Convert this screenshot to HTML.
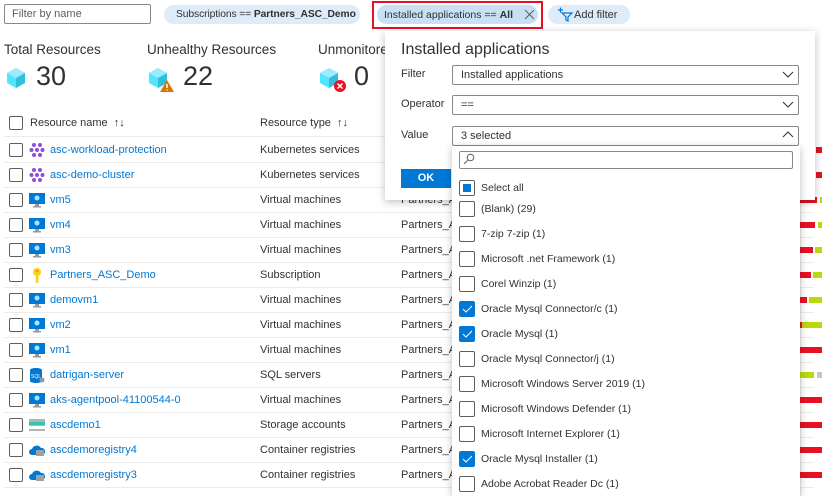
<!DOCTYPE html>
<html><head><meta charset="utf-8"><style>
*{box-sizing:border-box;margin:0;padding:0}
body{width:822px;height:496px;overflow:hidden;background:#fff;font-family:"Liberation Sans",sans-serif;font-size:11px;color:#323130;position:relative}
.a{position:absolute;white-space:nowrap}
.cb{position:absolute;width:14px;height:14px;border:1px solid #605e5c;border-radius:2px;background:#fff}
.row{position:absolute;left:4px;width:810px;height:25px;border-bottom:1px solid #edebe9}
.lnk{color:#0078d4}
.bar{position:absolute;height:6px}
.r{background:#e81123}.g{background:#bad80a}.gr{background:#c8c6c4}
.dd{position:absolute;left:452px;width:347px;height:20px;border:1px solid #8a8886;border-radius:2px;padding:3px 8px;font-size:11px}
.it{position:absolute;left:459px;height:18px;font-size:10.5px}
.it .c{position:absolute;left:0;top:0;width:16px;height:16px;border:1px solid #605e5c;border-radius:2px;background:#fff}
.it .c.on{background:#0078d4;border-color:#0078d4}
.it span{position:absolute;left:22px;top:2px;white-space:nowrap}
</style></head><body>

<div class="a" style="left:4px;top:4px;width:147px;height:20px;border:1px solid #8a8886;border-radius:2px;padding:3px 7px;color:#605e5c">Filter by name</div>
<div class="a" style="left:164px;top:5px;width:196px;height:19px;border-radius:10px;background:#deecf9;padding:4px 12px;font-size:10.3px;letter-spacing:-0.1px">Subscriptions == <b>Partners_ASC_Demo</b></div>
<div class="a" style="left:372px;top:1px;width:171px;height:28px;border:2px solid #e81123"></div>
<div class="a" style="left:377px;top:5px;width:161px;height:19px;border-radius:10px;background:#c7e0f4;padding:4px 7px;font-size:10.5px">Installed applications == <b>All</b></div>
<svg class="a" style="left:524px;top:9px" width="11" height="11"><path d="M1 1l9 9M10 1l-9 9" stroke="#605e5c" stroke-width="1"/></svg>
<div class="a" style="left:548px;top:5px;width:82px;height:19px;border-radius:10px;background:#deecf9;padding:4px 8px 3px 26px">Add filter</div>
<svg class="a" style="left:556px;top:6px" width="18" height="16"><path d="M2 4h5M4.5 1.5v5" stroke="#0078d4" stroke-width="1.2"/><path d="M6 7h10l-4 4v4l-2-1v-3z" fill="none" stroke="#0078d4" stroke-width="1.2"/></svg>

<div class="a" style="left:4px;top:42px;font-size:13.5px">Total Resources</div>
<div class="a" style="left:147px;top:42px;font-size:13.5px">Unhealthy Resources</div>
<div class="a" style="left:318px;top:42px;font-size:13.5px">Unmonitored</div>
<svg class="a" style="left:5px;top:66px" width="22" height="24"><path d="M11 2l9 5v10l-9 5-9-5V7z" fill="#50e6ff"/><path d="M11 12l9-5v10l-9 5z" fill="#32bedd"/><path d="M2 7l9 5 9-5-9-5z" fill="#9cebff"/></svg>
<div class="a" style="left:36px;top:61px;font-size:27px;color:#323130">30</div>
<svg class="a" style="left:147px;top:66px" width="28" height="28"><path d="M11 2l9 5v10l-9 5-9-5V7z" fill="#50e6ff"/><path d="M11 12l9-5v10l-9 5z" fill="#32bedd"/><path d="M2 7l9 5 9-5-9-5z" fill="#9cebff"/><path d="M20 14l7 12H13z" fill="#db7500"/><path d="M20 18v4M20 23.5v1" stroke="#fff" stroke-width="1.5"/></svg>
<div class="a" style="left:183px;top:61px;font-size:27px">22</div>
<svg class="a" style="left:318px;top:66px" width="28" height="28"><path d="M11 2l9 5v10l-9 5-9-5V7z" fill="#50e6ff"/><path d="M11 12l9-5v10l-9 5z" fill="#32bedd"/><path d="M2 7l9 5 9-5-9-5z" fill="#9cebff"/><circle cx="22" cy="20" r="6" fill="#e81123"/><path d="M19.5 17.5l5 5M24.5 17.5l-5 5" stroke="#fff" stroke-width="1.5"/></svg>
<div class="a" style="left:354px;top:61px;font-size:27px">0</div>

<div class="row" style="top:112px;height:25px"></div>
<div class="cb" style="left:9px;top:116px"></div>
<div class="a" style="left:30px;top:117px;font-size:11px">Resource name &nbsp;↑↓</div>
<div class="a" style="left:260px;top:117px;font-size:11px">Resource type &nbsp;↑↓</div>
<div class="a" style="left:800px;top:100px;width:1px;height:396px;background:#edebe9"></div>

<div id="rows"></div>
<script>
var data=[
["asc-workload-protection","Kubernetes services","k"],
["asc-demo-cluster","Kubernetes services","k"],
["vm5","Virtual machines","v"],["vm4","Virtual machines","v"],["vm3","Virtual machines","v"],
["Partners_ASC_Demo","Subscription","s"],["demovm1","Virtual machines","v"],["vm2","Virtual machines","v"],["vm1","Virtual machines","v"],
["datrigan-server","SQL servers","q"],["aks-agentpool-41100544-0","Virtual machines","v"],["ascdemo1","Storage accounts","st"],
["ascdemoregistry4","Container registries","c"],["ascdemoregistry3","Container registries","c"]];
var bars=[[[816,6,'r']],[[816,6,'r']],[[800,17,'r'],[820,2,'g']],[[800,15,'r'],[818,4,'g']],[[800,13,'r'],[815,7,'g']],[[800,11,'r'],[813,9,'g']],[[800,7,'r'],[809,13,'g']],[[800,2,'r'],[802,20,'g']],[[800,22,'r']],[[800,14,'g'],[817,5,'gr']],[[800,22,'r']],[[800,22,'r']],[[800,22,'r']],[[800,22,'r']]];
var icons={
k:'<svg width="16" height="16"><g fill="#8c4fd6"><circle cx="5" cy="3" r="2"/><circle cx="11" cy="3" r="2"/><circle cx="2.5" cy="8" r="2"/><circle cx="8" cy="8" r="2"/><circle cx="13.5" cy="8" r="2"/><circle cx="5" cy="13" r="2"/><circle cx="11" cy="13" r="2"/></g></svg>',
v:'<svg width="16" height="16"><rect x="0" y="1" width="16" height="11" fill="#0078d4"/><circle cx="8" cy="6" r="2.5" fill="#9cebff"/><rect x="6" y="12" width="4" height="2" fill="#999"/><rect x="4" y="14" width="8" height="1.5" fill="#999"/></svg>',
s:'<svg width="16" height="16"><circle cx="8" cy="5" r="4" fill="#fcd116"/><rect x="6.8" y="8" width="2.6" height="8" fill="#fcd116"/><circle cx="8" cy="4" r="1.2" fill="#ff8c00"/></svg>',
q:'<svg width="16" height="16"><ellipse cx="7" cy="3" rx="6" ry="2" fill="#0072c6"/><rect x="1" y="3" width="12" height="11" fill="#0078d4"/><ellipse cx="7" cy="14" rx="6" ry="2" fill="#0078d4"/><text x="2" y="11" font-size="5" fill="#fff" font-family="Liberation Sans">SQL</text><circle cx="13" cy="13" r="2.5" fill="#999"/></svg>',
st:'<svg width="16" height="16"><rect x="0" y="2" width="16" height="12" fill="#b3b3b3"/><rect x="0" y="5" width="16" height="3" fill="#37c2b1"/><rect x="0" y="9" width="16" height="3" fill="#fff"/></svg>',
c:'<svg width="16" height="16"><path d="M3 13a3 3 0 010-6 5 5 0 019-1 3.5 3.5 0 011 7z" fill="#0078d4"/><rect x="7" y="8" width="8" height="6" fill="#a0a0a0"/></svg>'};
var h='';
data.forEach(function(d,i){var y=138+i*25;
h+='<div class="row" style="top:'+y+'px"></div><div class="cb" style="left:9px;top:'+(y+5)+'px"></div><div class="a" style="left:29px;top:'+(y+4)+'px">'+icons[d[2]]+'</div><div class="a lnk" style="left:50px;top:'+(y+6)+'px">'+d[0]+'</div><div class="a" style="left:260px;top:'+(y+6)+'px">'+d[1]+'</div>';
if(i>1)h+='<div class="a" style="left:401px;top:'+(y+6)+'px">Partners_ASC_Demo</div>';
bars[i].forEach(function(b){h+='<div class="bar '+b[2]+'" style="left:'+b[0]+'px;width:'+b[1]+'px;top:'+(y+9)+'px"></div>'});});
document.getElementById('rows').innerHTML=h;
</script>

<div class="a" style="left:385px;top:31px;width:430px;height:169px;background:#fff;box-shadow:0 2px 8px rgba(0,0,0,.25)"></div>
<div class="a" style="left:401px;top:41px;font-size:16px;color:#323130">Installed applications</div>
<div class="a" style="left:401px;top:68px">Filter</div>
<div class="a" style="left:401px;top:98px">Operator</div>
<div class="a" style="left:401px;top:129px">Value</div>
<div class="dd" style="top:65px">Installed applications</div>
<div class="dd" style="top:95px">==</div>
<div class="dd" style="top:126px">3 selected</div>
<svg class="a" style="left:782px;top:70px" width="12" height="10"><path d="M1 2l5 5 5-5" fill="none" stroke="#323130"/></svg>
<svg class="a" style="left:782px;top:100px" width="12" height="10"><path d="M1 2l5 5 5-5" fill="none" stroke="#323130"/></svg>
<svg class="a" style="left:782px;top:130px" width="12" height="10"><path d="M1 7l5-5 5 5" fill="none" stroke="#323130"/></svg>
<div class="a" style="left:401px;top:169px;width:50px;height:19px;background:#0078d4;color:#fff;font-weight:bold;text-align:center;padding-top:3px">OK</div>

<div class="a" style="left:452px;top:146px;width:348px;height:350px;background:#fff;box-shadow:0 2px 8px rgba(0,0,0,.25)"></div>
<div class="a" style="left:459px;top:151px;width:334px;height:18px;border:1px solid #8a8886;border-radius:2px"></div>
<svg class="a" style="left:463px;top:153px" width="12" height="12"><circle cx="7.5" cy="4.5" r="3.3" fill="none" stroke="#605e5c"/><path d="M5 7l-4 4" stroke="#605e5c"/></svg>
<div class="it" style="top:180px"><div class="c" style="background:#fff;border-color:#605e5c"><div style="position:absolute;left:3px;top:3px;width:8px;height:8px;background:#0078d4"></div></div><span>Select all</span></div>
<div id="list"></div>
<script>
var items=[["(Blank) (29)",0],["7-zip 7-zip (1)",0],["Microsoft .net Framework (1)",0],["Corel Winzip (1)",0],["Oracle Mysql Connector/c (1)",1],["Oracle Mysql (1)",1],["Oracle Mysql Connector/j (1)",0],["Microsoft Windows Server 2019 (1)",0],["Microsoft Windows Defender (1)",0],["Microsoft Internet Explorer (1)",0],["Oracle Mysql Installer (1)",1],["Adobe Acrobat Reader Dc (1)",0]];
var s='';items.forEach(function(t,i){var y=201+i*25;
s+='<div class="it" style="top:'+y+'px"><div class="c'+(t[1]?' on':'')+'">'+(t[1]?'<svg width="14" height="14" style="position:absolute;left:0;top:0"><path d="M3 7l3 3 6-6" fill="none" stroke="#fff" stroke-width="1"/></svg>':'')+'</div><span>'+t[0]+'</span></div>';});
document.getElementById('list').innerHTML=s;
</script>
</body></html>
